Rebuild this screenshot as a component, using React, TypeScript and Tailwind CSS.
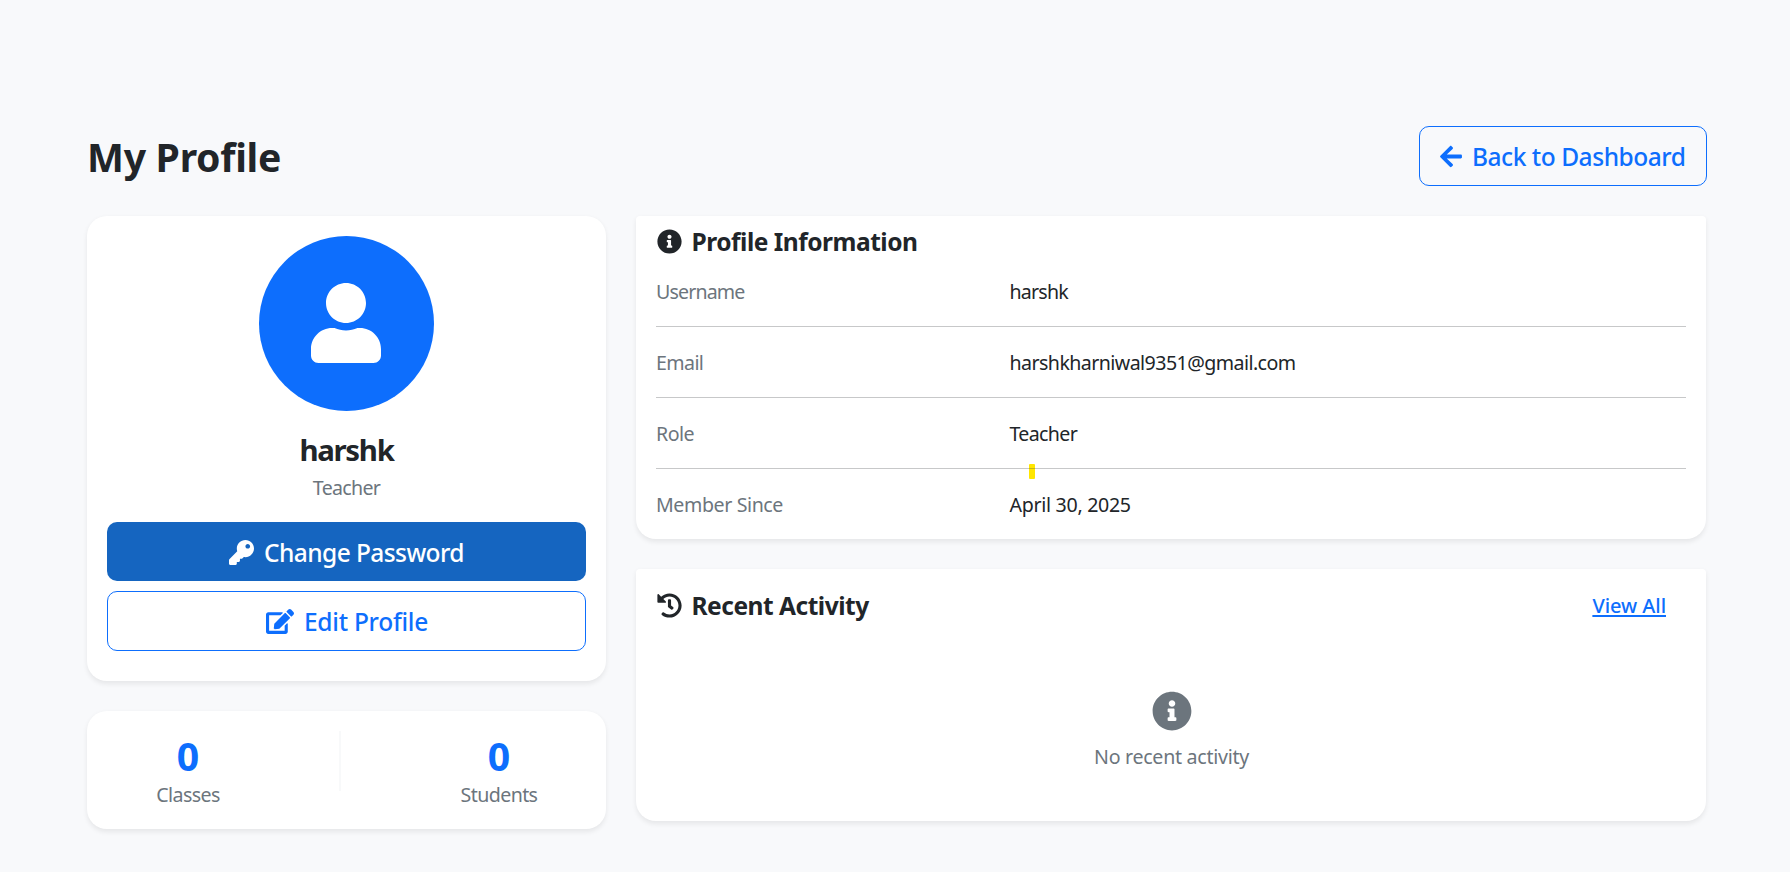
import type { ReactNode } from "react";
import { FaArrowLeft, FaEdit, FaHistory, FaInfoCircle, FaKey, FaUser } from "react-icons/fa";

const details = [
  { label: "Username", value: "harshk", labelClass: "tracking-[-0.85px]", valueClass: "tracking-[-0.8px]" },
  {
    label: "Email",
    value: "harshkharniwal9351@gmail.com",
    labelClass: "tracking-[-0.6px]",
    valueClass: "tracking-[-0.56px]",
  },
  { label: "Role", value: "Teacher", labelClass: "tracking-[-0.5px]", valueClass: "tracking-[-0.65px]" },
  {
    label: "Member Since",
    value: "April 30, 2025",
    labelClass: "tracking-[-0.4px]",
    valueClass: "tracking-[-0.3px]",
  },
];

function Card({ className, children }: { className: string; children: ReactNode }) {
  return <div className={`bg-white shadow-[0_2.5px_5px_rgba(0,0,0,0.075)] ${className}`}>{children}</div>;
}

function Stat({ value, label, className }: { value: number; label: string; className: string }) {
  return (
    <div className={`text-center ${className}`}>
      <div className="h-[48px] text-[39.2px] leading-[50px] font-bold text-[#0d6efd]">{value}</div>
      <div className="h-[30px] text-[19.6px] leading-[32px] tracking-[-0.6px] text-[#6c757d]">{label}</div>
    </div>
  );
}

export default function App() {
  return (
    <div className="min-h-screen bg-[#f8f9fb] pt-[126px] pl-[87px] font-['Noto_Sans',sans-serif] text-[#212529]">
      <div className="w-[1620px]">
        <header className="mb-[30px] flex h-[60px] items-center justify-between">
          <h1 className="pt-px text-[39.2px] leading-[48px] font-bold tracking-[-0.3px]">My Profile</h1>
          <button className="flex h-[60px] w-[288px] items-center gap-[10px] rounded-[10px] border border-[#0d6efd] pl-5 text-[24.5px] leading-[38px] font-medium tracking-[-0.46px] whitespace-nowrap text-[#0d6efd]">
            <FaArrowLeft className="h-[25px] w-[22px]" />
            <span className="pt-[2px]">Back to Dashboard</span>
          </button>
        </header>

        <div className="flex items-start gap-[30px]">
          <div className="flex w-[519px] flex-col gap-[30px]">
            <Card className="flex flex-col rounded-[20px] px-5 pt-5 pb-[30px]">
              <div className="flex h-[175px] w-[175px] justify-center self-center rounded-full bg-[#0d6efd] pt-[47px] pr-px">
                <FaUser className="h-20 w-[70px] text-white" />
              </div>
              <h2 className="mt-5 h-[36px] text-center text-[29.4px] leading-[38px] font-bold tracking-[-1.3px]">
                harshk
              </h2>
              <p className="mt-[5px] mb-5 h-[30px] text-center text-[19.6px] leading-[32px] tracking-[-0.7px] text-[#6c757d]">
                Teacher
              </p>
              <button className="mb-[10px] flex h-[59px] items-center justify-center gap-[10px] rounded-[10px] bg-[#1565c0] text-[24.5px] font-medium tracking-[-0.58px] text-white">
                <FaKey className="mt-[2px] h-[25px] w-[25px]" />
                <span className="pt-[3px]">Change Password</span>
              </button>
              <button className="flex h-[60px] items-center justify-center gap-[10px] rounded-[10px] border border-[#0d6efd] pl-px text-[24.5px] font-medium tracking-[-0.25px] text-[#0d6efd]">
                <FaEdit className="h-[25px] w-[28px]" />
                <span className="pt-[2px]">Edit Profile</span>
              </button>
            </Card>

            <Card className="flex justify-between rounded-[20px] p-5">
              <Stat value={0} label="Classes" className="w-[162px]" />
              <div className="mr-px h-[60px] w-[2px] bg-[#f8f9fa]" />
              <Stat value={0} label="Students" className="w-[174px]" />
            </Card>
          </div>

          <div className="flex w-[1070px] flex-col gap-[30px]">
            <Card className="rounded-t-[4px] rounded-b-[20px] px-5 pt-[10px] pb-5">
              <h3 className="mb-5 flex h-[30px] items-center gap-[10px] pl-[0.5px] text-[24.5px] leading-[30px] font-bold tracking-[-0.48px]">
                <FaInfoCircle className="h-[25px] w-[25px]" />
                <span className="pt-[2px]">Profile Information</span>
              </h3>
              {details.map((row, i) => (
                <div
                  key={row.label}
                  className={
                    i > 0
                      ? "relative mt-5 flex h-[51px] border-t border-[#c7c8c9] pt-5 text-[19.6px] leading-[32px]"
                      : "flex h-[30px] text-[19.6px] leading-[32px]"
                  }
                >
                  <div className={`w-[353.5px] text-[#6c757d] ${row.labelClass}`}>{row.label}</div>
                  <div className={row.valueClass}>{row.value}</div>
                  {row.label === "Member Since" && (
                    <>
                      <span className="absolute -top-[5px] left-[373px] h-[15px] w-[6px] rounded-[1px] bg-[#ffe600]" />
                      <span className="absolute -top-px left-[373px] h-px w-[6px] bg-[#c8b414]" />
                    </>
                  )}
                </div>
              ))}
            </Card>

            <Card className="rounded-t-[4px] rounded-b-[20px] px-5 pt-[10px] pb-[50px]">
              <div className="flex h-[53px] items-center justify-between pr-5">
                <h3 className="flex items-center gap-[10px] pl-[0.5px] text-[24.5px] leading-[30px] font-bold tracking-[-0.48px]">
                  <FaHistory className="h-[25px] w-[25px]" />
                  <span className="pt-px">Recent Activity</span>
                </h3>
                <a
                  href="#activity"
                  className="pt-px text-[20px] leading-[30px] font-medium tracking-[-0.05px] text-[#0d6efd] underline decoration-2 underline-offset-2"
                >
                  View All
                </a>
              </div>
              <div className="flex flex-col items-center pt-[59px] pl-px text-[#6c757d]">
                <FaInfoCircle className="mb-[10px] h-10 w-10" />
                <p className="h-[30px] text-[19.6px] leading-[32px] tracking-[-0.28px]">No recent activity</p>
              </div>
            </Card>
          </div>
        </div>
      </div>
    </div>
  );
}
